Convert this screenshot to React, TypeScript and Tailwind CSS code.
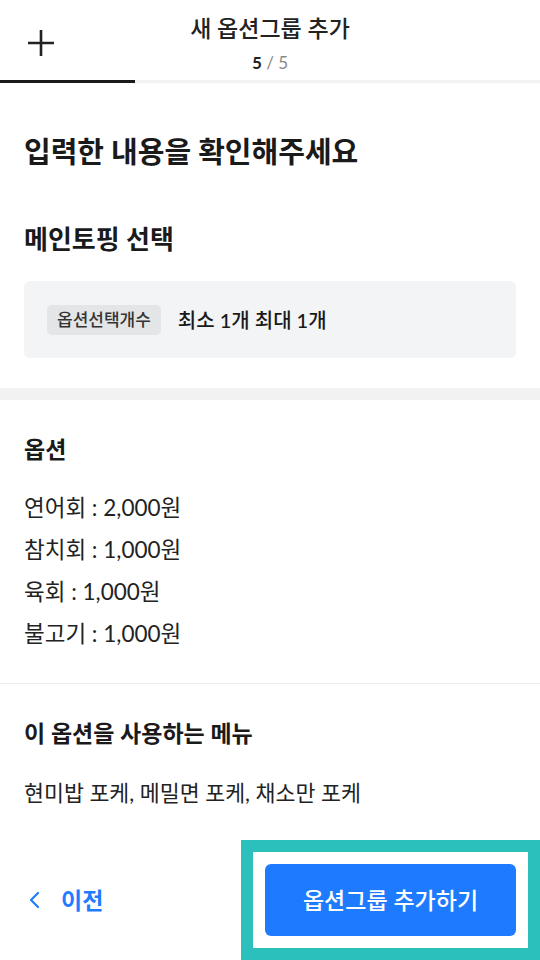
import React from "react";

export default function App() {
  const font = { fontFamily: 'Lato, "Noto Sans CJK KR", sans-serif' };
  return (
    <div className="w-[540px] h-[960px] bg-white text-[#222] overflow-hidden flex flex-col" style={font}>
      {/* Header */}
      <div className="relative h-[80px] flex flex-col items-center">
        <div className="absolute left-[26px] top-[28px] w-[30px] h-[30px]">
          <svg width="30" height="30" viewBox="0 0 30 30">
            <path d="M15 2 V28 M2 15 H28" stroke="#222" strokeWidth="2.6" fill="none" />
          </svg>
        </div>
        <div className="mt-[14px] text-[23px] leading-[28px] font-medium text-[#222]">새 옵션그룹 추가</div>
        <div className="mt-[11px] text-[17px] leading-[20px]">
          <span className="font-bold text-[#222]">5</span>
          <span className="text-[#888]"> / 5</span>
        </div>
      </div>
      <div className="flex h-[3px]">
        <div className="w-[135px] bg-[#1a1a1a]" />
        <div className="flex-1 bg-[#f2f2f2]" />
      </div>

      <div className="px-6">
        <div className="mt-[51px] text-[29px] leading-[36px] font-bold text-[#1a1a1a]">입력한 내용을 확인해주세요</div>
        <div className="mt-[54px] text-[26px] leading-[30px] font-bold text-[#1a1a1a]">메인토핑 선택</div>
        <div className="mt-[27px] h-[77px] rounded-[6px] bg-[#f3f4f6] flex items-center pl-[23px] gap-[17px]">
          <span className="h-[30px] px-[10px] rounded-[5px] bg-[#e4e5e7] text-[17px] leading-[30px] text-[#333] font-medium">옵션선택개수</span>
          <span className="text-[20px] font-medium text-[#1a1a1a]">최소 1개 최대 1개</span>
        </div>
      </div>

      <div className="mt-[30px] h-[12px] bg-[#f2f2f2]" />

      <div className="px-6">
        <div className="mt-[35px] text-[23px] leading-[28px] font-semibold text-[#1a1a1a]">옵션</div>
        <div className="mt-[24px] text-[22.5px] leading-[42px] text-[#222]">
          <div>연어회 : 2,000원</div>
          <div>참치회 : 1,000원</div>
          <div>육회 : 1,000원</div>
          <div>불고기 : 1,000원</div>
        </div>
      </div>

      <div className="mt-[28px] h-px bg-[#ececec]" />

      <div className="px-6">
        <div className="mt-[35px] text-[23px] leading-[28px] font-semibold text-[#1a1a1a]">이 옵션을 사용하는 메뉴</div>
        <div className="mt-[32px] text-[21.7px] leading-[28px] text-[#222]">현미밥 포케, 메밀면 포케, 채소만 포케</div>
      </div>

      <div className="mt-[33px] flex items-center justify-between pl-[27px]">
        <div className="flex items-center gap-[20px] text-[#1f7cff]">
          <svg width="14" height="20" viewBox="0 0 14 20">
            <path d="M11 3 L4 10 L11 17" stroke="#1f7cff" strokeWidth="2.2" fill="none" strokeLinecap="round" strokeLinejoin="round" />
          </svg>
          <span className="text-[23px] font-semibold">이전</span>
        </div>
        <div className="border-[12px] border-[#2cc0bc] p-[12px] bg-white">
          <div className="w-[251px] h-[72px] rounded-[6px] bg-[#1e7bff] flex items-center justify-center text-white text-[23px] font-medium">
            옵션그룹 추가하기
          </div>
        </div>
      </div>
    </div>
  );
}
